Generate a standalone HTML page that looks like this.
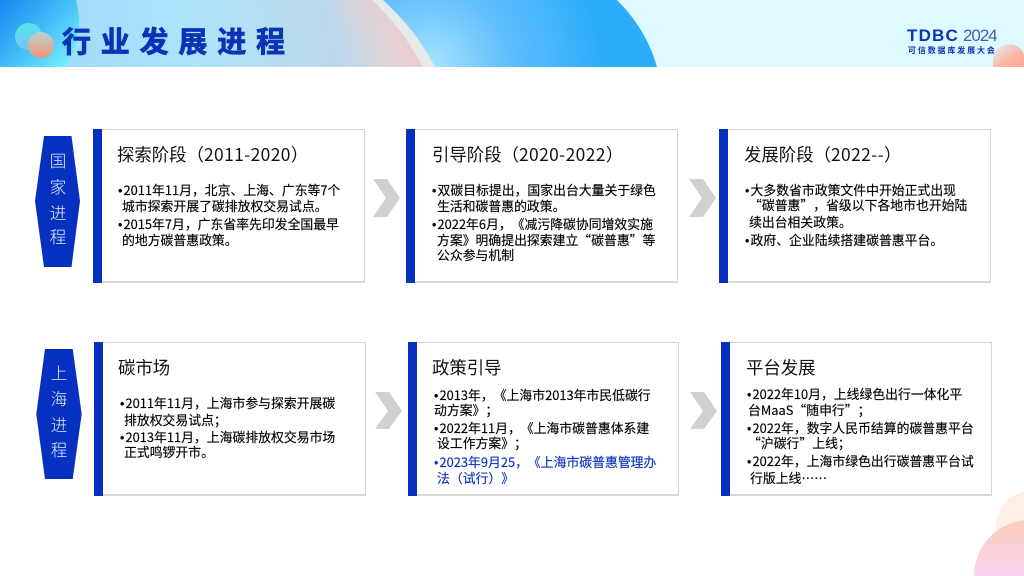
<!DOCTYPE html>
<html lang="zh-CN"><head><meta charset="utf-8">
<style>
html,body{margin:0;padding:0;background:#fff;width:1024px;height:576px;overflow:hidden}
#p{position:relative;width:1024px;height:576px;overflow:hidden;background:#fff;font-family:"Liberation Sans","Noto Sans CJK SC",sans-serif}
#p svg{position:absolute;left:0;top:0}
.t,.h,.l,.v{position:absolute;white-space:nowrap;font-family:"Noto Sans CJK SC","Liberation Sans",sans-serif;text-spacing-trim:space-all;font-feature-settings:"palt" 0,"halt" 0,"chws" 0}
.t{font-size:17.4px;line-height:22px;color:#111}
.t span{letter-spacing:.4px}
.l{font-size:12.85px;line-height:18px;color:#000;-webkit-text-stroke:.15px currentColor}
.l i{font-style:normal;font-family:"Liberation Sans",sans-serif;display:inline-block;width:5.5px;font-size:12.5px}
.v{font-size:16.5px;line-height:22px;color:#e8eeff;width:46px;text-align:center;font-weight:300}
.b{color:#0b34c0}
.card{position:absolute;box-sizing:border-box;background:#fff;border:1px solid #d4d4d4;border-bottom:2px solid #d8d8d8;border-left:0}
.card:before{content:"";position:absolute;left:-9px;top:-1px;bottom:-2px;width:9px;background:#0630c0}
</style></head><body><div id="p">
<svg width="1024" height="576" viewBox="0 0 1024 576">
<defs>
<linearGradient id="bg" x1="60" y1="50" x2="400" y2="10" gradientUnits="userSpaceOnUse"><stop offset="0" stop-color="#9fdcfb"/><stop offset=".4" stop-color="#aee3fb"/><stop offset=".8" stop-color="#bcd8ea"/><stop offset="1" stop-color="#d8dce2"/></linearGradient>
<linearGradient id="pi" x1="345" y1="50" x2="420" y2="15" gradientUnits="userSpaceOnUse"><stop offset="0" stop-color="#f0c8c8" stop-opacity="0"/><stop offset="1" stop-color="#f0c8c8"/></linearGradient>
<linearGradient id="c1" x1="0" y1="0" x2="70" y2="67" gradientUnits="userSpaceOnUse"><stop offset="0" stop-color="#1487ee"/><stop offset=".45" stop-color="#3db4f8"/><stop offset="1" stop-color="#76f3ff"/></linearGradient>
<radialGradient id="bl" cx="430" cy="67" r="170" gradientUnits="userSpaceOnUse"><stop offset="0" stop-color="#a8e4fe"/><stop offset=".45" stop-color="#62bffc"/><stop offset="1" stop-color="#2cadfb"/></radialGradient>
<linearGradient id="cy" x1="0" y1="0" x2="0" y2="1"><stop offset="0" stop-color="#52e6ea"/><stop offset="1" stop-color="#78c4f6"/></linearGradient>
<linearGradient id="pk" x1="0" y1="0" x2="0" y2="1"><stop offset="0" stop-color="#b8d2d2"/><stop offset="1" stop-color="#f29474"/></linearGradient>
<linearGradient id="ball" x1="0" y1="0" x2="1" y2="1"><stop offset="0" stop-color="#dcf3f8"/><stop offset=".6" stop-color="#fbb6a6"/><stop offset="1" stop-color="#fda896"/></linearGradient>
<linearGradient id="c2" x1="0" y1="0" x2="0" y2="1"><stop offset="0" stop-color="#fbcfb9"/><stop offset="1" stop-color="#f8d2ee"/></linearGradient>
<clipPath id="hd"><rect width="1024" height="67"/></clipPath>
</defs>
<g clip-path="url(#hd)">
<rect width="1024" height="67" fill="#dffaff"/>
<path d="M0 0H617C637 20 650 42 657 67H0Z" fill="url(#bl)"/>
<path d="M0 0H383C405 20 422 42 435 67H0Z" fill="#e6ebea"/>
<path d="M0 0H372C393 20 410 42 423 67H0Z" fill="url(#bg)"/>
<path d="M0 0H372C393 20 410 42 423 67H0Z" fill="url(#pi)"/>
<path d="M0 0H75.9A79 79 0 0 1 64.9 67H0Z" fill="url(#c1)"/>
<path d="M993 67V60A16 16 0 0 1 1024 54.5V67Z" fill="url(#ball)"/>
<circle cx="28.5" cy="36.5" r="13.5" fill="url(#cy)"/>
<circle cx="41" cy="45" r="13" fill="url(#pk)"/>
</g>
<path d="M1024 491.7A35 35 0 0 0 1024 560.3Z" fill="#fdeee6"/>
<path d="M974 576A56 56 0 0 1 1024 520.3V576Z" fill="url(#c2)"/>
<polygon points="44,136 71.5,136 80,201 71.5,267 44,267 35,201" fill="#0630c0"/>
<polygon points="45,349 72.7,349 81.7,414 72.7,479 45,479 36.3,414" fill="#0630c0"/>
<g fill="#d0d0d0">
<polygon points="373,179 387,179 400,198 387,217 373,217 386,198"/>
<polygon points="689,179 703,179 716,198 703,217 689,217 702,198"/>
<polygon points="375,392 389,392 402,411 389,429 375,429 388,411"/>
<polygon points="690,392 704,392 717,411 704,429 690,429 703,411"/>
</g>
</svg>

<div class="h" style="left:62px;top:20px;font-size:29px;line-height:40px;font-weight:700;letter-spacing:9.8px;color:#0a34b6;-webkit-text-stroke:.8px #0a34b6">行业发展进程</div>
<div class="h" style="left:907px;top:26px;font-family:'Liberation Sans',sans-serif;font-size:17px;line-height:20px;font-weight:700;letter-spacing:1.2px;color:#0a34b6">TDBC</div>
<div class="h" style="left:963px;top:26px;font-family:'Liberation Sans',sans-serif;font-size:17px;line-height:20px;font-weight:400;letter-spacing:-1.1px;color:#3f5fc0">2024</div>
<div class="h" style="left:908px;top:46px;font-size:8px;line-height:10px;font-weight:700;letter-spacing:1.85px;color:#0a34b6">可信数据库发展大会</div>

<div class="card" style="left:102px;top:129px;width:263px;height:154px"></div>
<div class="card" style="left:415px;top:129px;width:263px;height:154px"></div>
<div class="card" style="left:728px;top:129px;width:263px;height:154px"></div>
<div class="card" style="left:103px;top:342px;width:263px;height:154px"></div>
<div class="card" style="left:417px;top:342px;width:262px;height:154px"></div>
<div class="card" style="left:729.5px;top:342px;width:262.5px;height:154px"></div>

<div class="v" style="left:35px;top:149px">国</div>
<div class="v" style="left:35px;top:175px">家</div>
<div class="v" style="left:35px;top:201px">进</div>
<div class="v" style="left:35px;top:225px">程</div>
<div class="v" style="left:36px;top:361px">上</div>
<div class="v" style="left:36px;top:387px">海</div>
<div class="v" style="left:36px;top:413px">进</div>
<div class="v" style="left:36px;top:438px">程</div>

<div class="t" style="left:117px;top:144px">探索阶段（<span>2011-2020</span>）</div>
<div class="l" style="left:118px;top:181px"><i>•</i>2011年11月，北京、上海、广东等7个</div>
<div class="l" style="left:122px;top:197px">城市探索开展了碳排放权交易试点。</div>
<div class="l" style="left:118px;top:215px"><i>•</i>2015年7月，广东省率先印发全国最早</div>
<div class="l" style="left:122px;top:231px">的地方碳普惠政策。</div>

<div class="t" style="left:432px;top:144px">引导阶段（<span>2020-2022</span>）</div>
<div class="l" style="left:432px;top:181px"><i>•</i>双碳目标提出，国家出台大量关于绿色</div>
<div class="l" style="left:437px;top:197px">生活和碳普惠的政策。</div>
<div class="l" style="left:432px;top:215px"><i>•</i>2022年6月，《减污降碳协同增效实施</div>
<div class="l" style="left:437px;top:231px">方案》明确提出探索建立“碳普惠”等</div>
<div class="l" style="left:437px;top:246px">公众参与机制</div>

<div class="t" style="left:744px;top:144px">发展阶段（<span>2022--</span>）</div>
<div class="l" style="left:745px;top:181px"><i>•</i>大多数省市政策文件中开始正式出现</div>
<div class="l" style="left:749px;top:196px">“碳普惠”，省级以下各地市也开始陆</div>
<div class="l" style="left:749px;top:213px">续出台相关政策。</div>
<div class="l" style="left:745px;top:231px"><i>•</i>政府、企业陆续搭建碳普惠平台。</div>

<div class="t" style="left:118px;top:357px">碳市场</div>
<div class="l" style="left:120px;top:394px"><i>•</i>2011年11月，上海市参与探索开展碳</div>
<div class="l" style="left:124px;top:411px">排放权交易试点；</div>
<div class="l" style="left:120px;top:428px"><i>•</i>2013年11月，上海碳排放权交易市场</div>
<div class="l" style="left:124px;top:443px">正式鸣锣开市。</div>

<div class="t" style="left:432px;top:357px">政策引导</div>
<div class="l" style="left:434px;top:386px"><i>•</i>2013年，《上海市2013年市民低碳行</div>
<div class="l" style="left:434px;top:401px">动方案》；</div>
<div class="l" style="left:434px;top:419px"><i>•</i>2022年11月，《上海市碳普惠体系建</div>
<div class="l" style="left:437px;top:434px">设工作方案》；</div>
<div class="l b" style="left:434px;top:453px"><i>•</i>2023年9月25，《上海市碳普惠管理办</div>
<div class="l b" style="left:437px;top:469px">法（试行）》</div>

<div class="t" style="left:746px;top:357px">平台发展</div>
<div class="l" style="left:747px;top:385px"><i>•</i>2022年10月，上线绿色出行一体化平</div>
<div class="l" style="left:748px;top:401px">台MaaS“随申行”；</div>
<div class="l" style="left:747px;top:419px"><i>•</i>2022年，数字人民币结算的碳普惠平台</div>
<div class="l" style="left:748px;top:434px">“沪碳行”上线；</div>
<div class="l" style="left:747px;top:452px"><i>•</i>2022年，上海市绿色出行碳普惠平台试</div>
<div class="l" style="left:750px;top:469px">行版上线……</div>
</div></body></html>
